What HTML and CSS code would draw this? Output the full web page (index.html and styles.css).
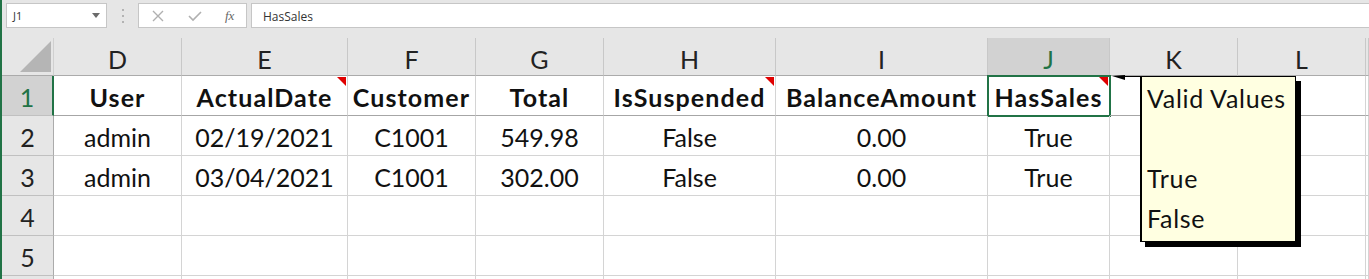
FILE: index.html
```html
<html>
  <head>
    <title>Sales sheet</title>
    <link rel="stylesheet" href="styles.css">
  </head>
  <body>
    <div class="frame">
      <div class="formula-bar">
        <div class="name-box">
          <span>J1</span>
          <svg class="drop" width="8" height="5" viewBox="0 0 8 5"><path d="M0 0H8L4 5Z" fill="#6b6b6b"/></svg>
        </div>
        <svg class="grip" width="4" height="18" viewBox="0 0 4 18">
          <rect x="1" y="2" width="2" height="2" fill="#b3b3b3"/>
          <rect x="1" y="8" width="2" height="2" fill="#b3b3b3"/>
          <rect x="1" y="14" width="2" height="2" fill="#b3b3b3"/>
        </svg>
        <div class="fx-buttons">
          <svg width="14" height="14" viewBox="0 0 14 14"><path d="M2 2L12 12M12 2L2 12" stroke="#b0b0b0" stroke-width="1.4" fill="none"/></svg>
          <svg width="16" height="14" viewBox="0 0 16 14"><path d="M2 7L6 11L14 3" stroke="#b0b0b0" stroke-width="1.6" fill="none"/></svg>
          <span class="fx">fx</span>
        </div>
        <div class="formula-input">HasSales</div>
      </div>

      <div class="sheet">
        <!-- column letters -->
        <div class="corner"><svg width="31" height="31" viewBox="0 0 31 31"><path d="M0 31H31V0Z" fill="#b5b5b5"/></svg></div>
        <div class="col-head">D</div>
        <div class="col-head">E</div>
        <div class="col-head">F</div>
        <div class="col-head">G</div>
        <div class="col-head">H</div>
        <div class="col-head">I</div>
        <div class="col-head selected">J</div>
        <div class="col-head">K</div>
        <div class="col-head">L</div>
        <div class="col-head"></div>

        <!-- row 1: table headers -->
        <div class="row-head selected">1</div>
        <div class="cell head">User</div>
        <div class="cell head note">ActualDate</div>
        <div class="cell head">Customer</div>
        <div class="cell head">Total</div>
        <div class="cell head note">IsSuspended</div>
        <div class="cell head">BalanceAmount</div>
        <div class="cell head note active">HasSales</div>
        <div class="cell head"></div>
        <div class="cell head"></div>
        <div class="cell head"></div>

        <div class="row-head">2</div>
        <div class="cell">admin</div>
        <div class="cell">02/19/2021</div>
        <div class="cell">C1001</div>
        <div class="cell">549.98</div>
        <div class="cell">False</div>
        <div class="cell">0.00</div>
        <div class="cell">True</div>
        <div class="cell"></div>
        <div class="cell"></div>
        <div class="cell"></div>

        <div class="row-head">3</div>
        <div class="cell">admin</div>
        <div class="cell">03/04/2021</div>
        <div class="cell">C1001</div>
        <div class="cell">302.00</div>
        <div class="cell">False</div>
        <div class="cell">0.00</div>
        <div class="cell">True</div>
        <div class="cell"></div>
        <div class="cell"></div>
        <div class="cell"></div>

        <div class="row-head">4</div>
        <div class="cell"></div><div class="cell"></div><div class="cell"></div><div class="cell"></div><div class="cell"></div>
        <div class="cell"></div><div class="cell"></div><div class="cell"></div><div class="cell"></div><div class="cell"></div>

        <div class="row-head">5</div>
        <div class="cell"></div><div class="cell"></div><div class="cell"></div><div class="cell"></div><div class="cell"></div>
        <div class="cell"></div><div class="cell"></div><div class="cell"></div><div class="cell"></div><div class="cell"></div>

        <!-- next row, only its top edge is in view -->
        <div class="row-head"></div>
        <div class="cell"></div><div class="cell"></div><div class="cell"></div><div class="cell"></div><div class="cell"></div>
        <div class="cell"></div><div class="cell"></div><div class="cell"></div><div class="cell"></div><div class="cell"></div>

        <!-- comment attached to J1 -->
        <svg class="connector" width="32" height="8" viewBox="0 0 32 8">
          <path d="M0 1L13 0L13 5Z" fill="#000"/>
          <path d="M10 1.5H31" stroke="#000" stroke-width="1"/>
        </svg>
        <div class="comment">
          <div>Valid Values</div>
          <div>&nbsp;</div>
          <div>True</div>
          <div>False</div>
        </div>
      </div>
    </div>
  </body>
</html>
```

FILE: styles.css
```css
body {
  margin: 0;
  overflow: hidden;
  background: #e6e6e6;
}

.frame {
  border-left: 2px solid #217346;
  height: 279px;
  overflow: hidden;
  font-family: Lato, "Open Sans", sans-serif;
}

/* formula bar */
.formula-bar {
  height: 38px;
  box-sizing: border-box;
  padding: 3px 0 0 4px;
  display: flex;
  align-items: flex-start;
  font-family: "Open Sans", sans-serif;
  font-size: 11px;
  color: #333;
}

.name-box {
  width: 101px;
  height: 25px;
  box-sizing: border-box;
  border: 1px solid #c6c6c6;
  background: #fff;
  display: flex;
  align-items: center;
  justify-content: space-between;
  padding: 0 6px 0 6px;
}

.grip {
  margin: 4px 13px 0 14px;
}

.fx-buttons {
  width: 109px;
  height: 25px;
  box-sizing: border-box;
  border: 1px solid #c6c6c6;
  background: #fff;
  display: flex;
  align-items: center;
  padding: 0 8px 0 12px;
  gap: 22px;
}

.fx {
  font-family: "Liberation Serif", serif;
  font-style: italic;
  font-size: 13px;
  color: #666;
}

.formula-input {
  flex: 1;
  height: 25px;
  box-sizing: border-box;
  margin-left: 4px;
  border: 1px solid #c6c6c6;
  border-right: none;
  background: #fff;
  padding: 4px 0 0 11px;
  font-size: 12px;
}

/* grid */
.sheet {
  position: relative;
  display: grid;
  grid-template-columns: 52px 128px 166px 128px 128px 172px 212px 122px 128px 128px 1fr;
  grid-template-rows: 38px;
  grid-auto-rows: 40px;
  background: #fff;
  font-size: 25px;
  color: #111;
}

.sheet > div {
  box-sizing: border-box;
  text-align: center;
  white-space: nowrap;
  padding-top: 3px;
  line-height: 36px;
}

.corner {
  background: #e6e6e6;
  border-right: 1px solid #d0d0d0;
  border-bottom: 1px solid #ababab;
  display: flex;
  align-items: flex-end;
  justify-content: flex-end;
  padding: 0 2px 3px 0 !important;
}

.col-head {
  background: #e6e6e6;
  border-right: 1px solid #c8c8c8;
  border-bottom: 1px solid #ababab;
  color: #222;
}

.col-head.selected {
  background: #d2d2d2;
  color: #217346;
  border-bottom: 1px solid #217346;
}

.row-head {
  background: #e6e6e6;
  border-right: 1px solid #ababab;
  border-bottom: 1px solid #c0c0c0;
  color: #222;
}

.row-head.selected {
  background: #d2d2d2;
  color: #217346;
  border-right: 2px solid #217346;
}

.cell {
  position: relative;
  border-right: 1px solid #d4d4d4;
  border-bottom: 1px solid #d4d4d4;
}

.cell.head {
  font-weight: bold;
  letter-spacing: 1.1px;
  border-bottom-color: #a6a6a6;
}

/* red comment markers */
.cell.note::before {
  content: "";
  position: absolute;
  top: 1px;
  right: 1px;
  border-top: 9px solid #e00000;
  border-left: 9px solid transparent;
}

/* selected cell outline */
.cell.active::after {
  content: "";
  position: absolute;
  top: -1px;
  left: -1px;
  right: -2px;
  bottom: -2px;
  border: 2px solid #217346;
}

.sheet .connector {
  position: absolute;
  left: 1110px;
  top: 37px;
}

.sheet .comment {
  position: absolute;
  left: 1138px;
  top: 38px;
  width: 156px;
  height: 166px;
  box-sizing: border-box;
  background: #ffffe1;
  border: 1px solid #000;
  border-left-width: 2px;
  box-shadow: 5px 5px 0 #000;
  padding: 1px 0 0 5px;
  text-align: left;
  font-size: 25px;
  letter-spacing: 0.7px;
  color: #111;
}

.sheet .comment div {
  line-height: 40px;
  text-align: left;
}
```
